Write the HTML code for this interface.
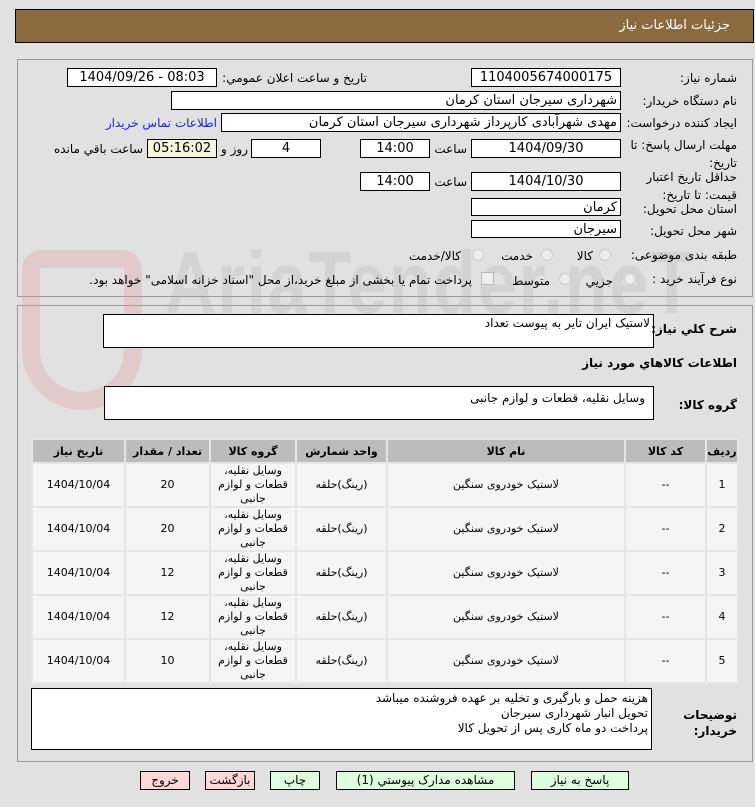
<!DOCTYPE html>
<html><head><meta charset="utf-8"><style>
body{margin:0;width:755px;height:807px;background:#e1e1e1;position:relative;overflow:hidden;font-family:Tahoma,"DejaVu Sans","Liberation Sans",sans-serif;font-size:12px;color:#000}
.a{position:absolute}
.box{position:absolute;background:#fff;border:1px solid #000;box-sizing:border-box;height:19px;line-height:17px;text-align:center;font-size:13px}
.r{direction:rtl;text-align:right;padding-right:3px}
.l{position:absolute;direction:rtl;white-space:nowrap;font-size:12px}
.rad{position:absolute;width:12px;height:12px;border-radius:50%;border:1px solid #ccc;background:#eee;box-sizing:border-box}
table{border-collapse:separate;border-spacing:2px;background:#e6e6e6;table-layout:fixed}
td,th{text-align:center;font-size:11px;padding:0;overflow:hidden}
th{background:#bcbcbc;height:22px;font-weight:bold}
td{background:#f5f5f5;height:41px;line-height:14px}
.btn{position:absolute;top:771px;height:19px;border:1px solid #000;box-sizing:border-box;text-align:center;line-height:17px;font-size:12px;background:#ddffdd}
.red{background:#ffd7d7}
</style></head><body>
<div class="a" style="left:15px;top:9px;width:739px;height:34px;background:#8b6a3f;border:1px solid #000;box-sizing:border-box"></div>
<div class="l" style="right:25px;top:18px;color:#fff;font-size:13px">جزئيات اطلاعات نياز</div>
<div class="a" style="left:17px;top:59px;width:736px;height:238px;border:1px solid #999;box-sizing:border-box"></div>
<div class="a" style="left:17px;top:305px;width:736px;height:457px;border:1px solid #999;box-sizing:border-box"></div>
<div class="a" style="left:22px;top:250px;width:120px;height:160px;border:18px solid rgba(225,150,150,.3);border-radius:20px 20px 60px 60px;box-sizing:border-box"></div>
<div class="a" style="left:165px;top:232px;font:bold 88px 'Liberation Sans',sans-serif;color:rgba(170,170,170,.25);letter-spacing:2px;transform:scaleX(.8);transform-origin:left">AriaTender.neT</div>

<div class="l" style="right:18px;top:71px">شماره نياز:</div>
<div class="box" style="left:471px;top:68px;width:150px">1104005674000175</div>
<div class="l" style="right:388px;top:71px">تاريخ و ساعت اعلان عمومي:</div>
<div class="box" style="left:67px;top:68px;width:150px">1404/09/26 - 08:03</div>
<div class="l" style="right:18px;top:94px">نام دستگاه خريدار:</div>
<div class="box r" style="left:171px;top:91px;width:450px">شهرداری سیرجان استان کرمان</div>
<div class="l" style="right:18px;top:116px">ايجاد کننده درخواست:</div>
<div class="box r" style="left:221px;top:113px;width:400px">مهدی شهرآبادی کارپرداز شهرداری سیرجان استان کرمان</div>
<div class="l" style="right:538px;top:116px;color:#2222dd">اطلاعات تماس خريدار</div>
<div class="l" style="right:18px;top:136px;line-height:18px">مهلت ارسال پاسخ: تا<br>تاريخ:</div>
<div class="box" style="left:471px;top:139px;width:150px">1404/09/30</div>
<div class="l" style="right:288px;top:142px">ساعت</div>
<div class="box" style="left:360px;top:139px;width:70px">14:00</div>
<div class="box" style="left:251px;top:139px;width:70px">4</div>
<div class="l" style="right:507px;top:142px">روز و</div>
<div class="box" style="left:147px;top:139px;width:70px;background:#f5f5dc">05:16:02</div>
<div class="l" style="right:612px;top:142px">ساعت باقي مانده</div>
<div class="l" style="right:18px;top:168px;line-height:18px">حداقل تاريخ اعتبار<br>قيمت: تا تاريخ:</div>
<div class="box" style="left:471px;top:172px;width:150px">1404/10/30</div>
<div class="l" style="right:288px;top:175px">ساعت</div>
<div class="box" style="left:360px;top:172px;width:70px">14:00</div>
<div class="l" style="right:18px;top:202px">استان محل تحويل:</div>
<div class="box r" style="left:471px;top:198px;width:150px;height:18px">کرمان</div>
<div class="l" style="right:18px;top:224px">شهر محل تحويل:</div>
<div class="box r" style="left:471px;top:220px;width:150px;height:18px">سیرجان</div>
<div class="l" style="right:18px;top:248px">طبقه بندی موضوعی:</div>
<div class="rad" style="left:599px;top:249px"></div><div class="l" style="right:162px;top:249px">کالا</div>
<div class="rad" style="left:541px;top:249px"></div><div class="l" style="right:222px;top:249px">خدمت</div>
<div class="rad" style="left:472px;top:249px"></div><div class="l" style="right:294px;top:249px">کالا/خدمت</div>
<div class="l" style="right:18px;top:272px">نوع فرآيند خريد :</div>
<div class="rad" style="left:624px;top:273px"></div><div class="l" style="right:142px;top:274px">جزيي</div>
<div class="rad" style="left:559px;top:273px"></div><div class="l" style="right:205px;top:274px">متوسط</div>
<div class="a" style="left:481px;top:272px;width:11px;height:11px;border:1px solid #bbb;background:#eee"></div>
<div class="l" style="right:283px;top:273px">پرداخت تمام يا بخشی از مبلغ خريد،از محل "اسناد خزانه اسلامی" خواهد بود.</div>

<div class="box r" style="left:103px;top:314px;width:551px;height:34px;text-align:right;font-size:12px">لاستیک ایران تایر  به پیوست تعداد</div>
<div class="l" style="right:18px;top:322px;font-weight:bold;font-size:12px">شرح کلي نياز:</div>
<div class="l" style="right:18px;top:356px;font-weight:bold;font-size:12px">اطلاعات کالاهاي مورد نياز</div>
<div class="l" style="right:18px;top:398px;font-weight:bold;font-size:12px">گروه کالا:</div>
<div class="box r" style="left:104px;top:386px;width:550px;height:34px;padding-top:3px;padding-right:8px;font-size:12px">وسایل نقلیه، قطعات و لوازم جانبی</div>

<table class="a" style="left:31px;top:438px;width:708px;direction:rtl">
<colgroup><col style="width:30px"><col style="width:79px"><col style="width:236px"><col style="width:89px"><col style="width:84px"><col style="width:83px"><col style="width:91px"></colgroup>
<tr><th>رديف</th><th>کد کالا</th><th>نام کالا</th><th>واحد شمارش</th><th>گروه کالا</th><th>تعداد / مقدار</th><th>تاريخ نياز</th></tr>
<tr><td>1</td><td>--</td><td>لاستیک خودروی سنگین</td><td>(رينگ)حلقه</td><td>وسایل نقلیه،<br>قطعات و لوازم<br>جانبی</td><td>20</td><td>1404/10/04</td></tr>
<tr><td>2</td><td>--</td><td>لاستیک خودروی سنگین</td><td>(رينگ)حلقه</td><td>وسایل نقلیه،<br>قطعات و لوازم<br>جانبی</td><td>20</td><td>1404/10/04</td></tr>
<tr><td>3</td><td>--</td><td>لاستیک خودروی سنگین</td><td>(رينگ)حلقه</td><td>وسایل نقلیه،<br>قطعات و لوازم<br>جانبی</td><td>12</td><td>1404/10/04</td></tr>
<tr><td>4</td><td>--</td><td>لاستیک خودروی سنگین</td><td>(رينگ)حلقه</td><td>وسایل نقلیه،<br>قطعات و لوازم<br>جانبی</td><td>12</td><td>1404/10/04</td></tr>
<tr><td>5</td><td>--</td><td>لاستیک خودروی سنگین</td><td>(رينگ)حلقه</td><td>وسایل نقلیه،<br>قطعات و لوازم<br>جانبی</td><td>10</td><td>1404/10/04</td></tr>
</table>

<div class="l" style="right:18px;top:707px;font-weight:bold;font-size:12px;line-height:16px">توضيحات<br>خريدار:</div>
<div class="box r" style="left:31px;top:688px;width:621px;height:62px;line-height:15px;font-size:12px;padding-top:2px">هزینه حمل و بارگیری و تخلیه بر عهده فروشنده میباشد<br>تحویل انبار شهرداری سیرجان<br>پرداخت دو ماه کاری پس از تحویل کالا</div>

<div class="btn" style="left:531px;width:98px">پاسخ به نياز</div>
<div class="btn" style="left:336px;width:179px">مشاهده مدارک پيوستي (1)</div>
<div class="btn" style="left:270px;width:50px">چاپ</div>
<div class="btn red" style="left:205px;width:50px">بازگشت</div>
<div class="btn red" style="left:140px;width:50px">خروج</div>
</body></html>
